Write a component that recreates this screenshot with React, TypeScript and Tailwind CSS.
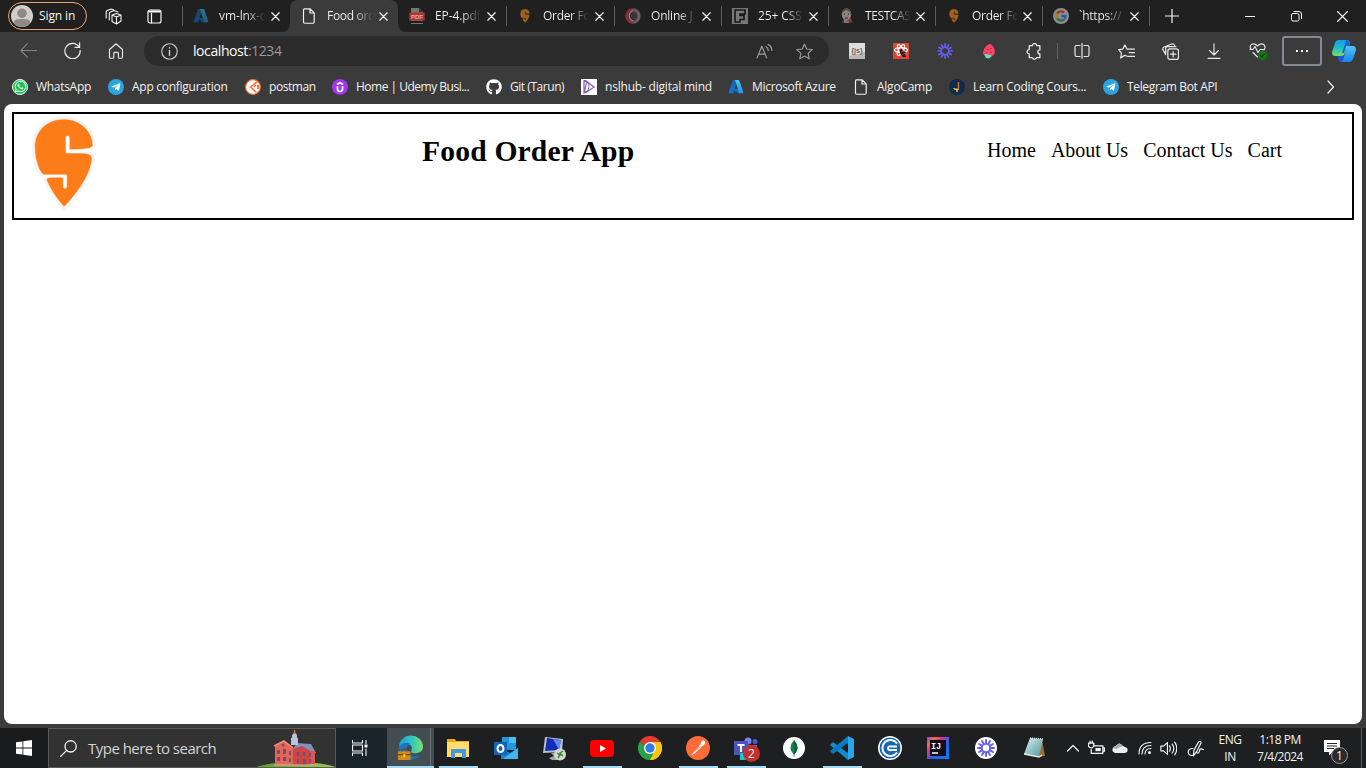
import React from "react";
import { FaGithub, FaWhatsapp, FaTelegramPlane } from "react-icons/fa";

type P = { children: React.ReactNode; s?: number; vb?: string; className?: string; w?: number };
/* Thin-line icon base */
const Line = ({ children, s = 16, vb = "0 0 16 16", className = "", w = 1 }: P) => (
  <svg width={s} height={s} viewBox={vb} fill="none" stroke="currentColor" strokeWidth={w} strokeLinecap="round" strokeLinejoin="round" className={"shrink-0 " + className}>{children}</svg>
);
const Art = ({ children, s = 16, vb = "0 0 16 16", className = "" }: P) => (
  <svg width={s} height={s} viewBox={vb} className={"shrink-0 " + className}>{children}</svg>
);

const Azure = () => (
  <Art>
    <defs>
      <linearGradient id="azl" x1="0" y1="0" x2="0" y2="1"><stop stopColor="#1a5fae" /><stop offset="1" stopColor="#0b7ad6" /></linearGradient>
      <linearGradient id="azr" x1="0" y1="0" x2="0" y2="1"><stop stopColor="#43c9f2" /><stop offset="1" stopColor="#2794e4" /></linearGradient>
    </defs>
    <path d="M5.5 1h4L5.2 14.3H1.6c-.7 0-1-.5-.8-1.1L4.7 1.6c.1-.4.4-.6.8-.6z" fill="url(#azl)" />
    <path d="M6.2 9.8h5.5l2.2 4.500H9.700L4.900 10.600z" fill="#0a73c9" />
    <path d="M6.200 1h4.300c.4 0 .7.2.8.6l4 11.600c.2.6-.2 1.100-.8 1.100h-4.200c.6 0 .9-.5.8-1.100L7.100 1.600C7 1.200 6.700 1 6.200 1z" fill="url(#azr)" />
  </Art>
);
const pinPath = "M102 15C150 15 188 52 189 94C189 102 181 104 162 105Q142 107 118 107V71a5 5 0 0 0-10 0V117H150Q187 117 186 132C184 180 142 238 102 279Q66 238 50 200Q47 191 62 190Q80 188 100 190V218a5 5 0 0 0 10 0V183H50Q40 184 36 179C22 160 14 130 14 98C14 50 52 15 102 15z";
const Pin = () => <Art vb="-47 -2 298 298"><path d={pinPath} fill="#a0601f" stroke="#202020" strokeWidth="3" /></Art>;
const Doc = () => <Line w={1.15}><path d="M3.500.8h5.700l4 4v9.200q0 1.200-1.200 1.200H3.700q-1.200 0-1.200-1.200V2Q2.500.8 3.500.8zM9 1v4h4" /></Line>;
const Pdf = () => (
  <Art><path d="M2 0h8l4 4v12H2z" fill="#777" /><path d="M10 0v4h4z" fill="#333" /><path d="M1 13h14v2H1z" fill="#202020" /><path d="M.3 4.500h15.400v8H.3z" fill="#ad3535" /><text x="8" y="10.800" fontSize="6" fontWeight="700" textAnchor="middle" fill="#d8b0b0" fontFamily="Liberation Sans">PDF</text></Art>
);
const Ring = () => (
  <Art><defs><linearGradient id="rg"><stop stopColor="#8f2929" /><stop offset="1" stopColor="#666" /></linearGradient></defs><circle cx="8" cy="8" r="8" fill="#383838" /><circle cx="8" cy="8" r="6" fill="none" stroke="url(#rg)" strokeWidth="2.800" /><path d="M8 2.500A5.500 5.500 0 0 0 8 13" stroke="#b58686" strokeWidth="1" fill="none" /></Art>
);
const Eff = () => <Art><path fill="#777" d="M0 0h16v16H0z" /><path d="M3 2h10v4H8v1.500h4v4H8v2.500H3z" fill="none" stroke="#181818" strokeWidth="1.600" /></Art>;
const Butler = () => (
  <Art><path d="M3 14l2-4h7l2 5H3z" fill="#333f49" /><path d="M5 10h5v5H5z" fill="#79756f" /><ellipse cx="7.500" cy="6.300" rx="4.700" ry="6" fill="#8d8379" /><path d="M2.800 5C3 1 6 0 8 .5S13 4 12 8l-1-4-4-2z" fill="#514b46" /><path d="M5 6h1m3 0h1M6 10h3" stroke="#292522" /><path d="M8 12l4-1v3l-4-1z" fill="#9c3535" /></Art>
);
const G = () => (
  <Art><circle cx="8" cy="8" r="8" fill="#8d8d8d" /><g fill="none" strokeWidth="2.300"><path d="M11.200 4.600A4.600 4.600 0 0 0 4 5.600" stroke="#a83028" /><path d="M4 5.600a4.600 4.600 0 0 0 0 4.800" stroke="#a88408" /><path d="M4 10.400a4.600 4.600 0 0 0 7 .9" stroke="#25773c" /><path d="M11 11.300A4.600 4.600 0 0 0 12.600 8H8" stroke="#2c5ba8" /></g></Art>
);
const X = () => <Line s={9} vb="0 0 9 9" w={1.25}><path d="M.8.8l7.400 7.400M8.200.8L.8 8.200" /></Line>;

type Tab = { t: string; icon: React.ReactNode; w: string; tr?: string; active?: boolean };
const tabs: Tab[] = [
  { t: "vm-lnx-d", icon: <span className="opacity-50"><Azure /></span>, w: "w-[108px]", tr: "tracking-[-0.1px]" },
  { t: "Food ord", icon: <Doc />, w: "w-[108px]", tr: "tracking-[-0.3px]", active: true },
  { t: "EP-4.pdf", icon: <Pdf />, w: "w-[108px]", tr: "tracking-[-0.1px]" },
  { t: "Order Fo", icon: <Pin />, w: "w-[108px]", tr: "tracking-[-0.3px]" },
  { t: "Online J", icon: <Ring />, w: "w-[107px]", tr: "tracking-[-0.2px]" },
  { t: "25+ CSS", icon: <Eff />, w: "w-[107px]", tr: "tracking-[-0.1px]" },
  { t: "TESTCAS", icon: <Butler />, w: "w-[107px]", tr: "tracking-[-0.4px]" },
  { t: "Order Fo", icon: <Pin />, w: "w-[107px]", tr: "tracking-[-0.3px]" },
  { t: "`https://", icon: <G />, w: "w-[107px]", tr: "tracking-[-0.2px]" },
];

function TabStrip() {
  return (
    <div className="flex h-8 items-center bg-[#202020] text-[#f4f4f4]">
      <div className="ml-2 flex h-7 w-[79px] items-center rounded-full border border-[#f0a46c] pl-[2px]">
        <Art s={22} vb="0 0 22 22"><circle cx="11" cy="11" r="11" fill="#d0cecb" /><circle cx="11" cy="8.300" r="4.800" fill="#8d8b89" /><path d="M3 18.500c0-4 2-4.500 8-4.500s8 .5 8 4.500a11 11 0 0 1-16 0z" fill="#8d8b89" /></Art>
        <span className="ml-[6px] whitespace-nowrap text-[12px] tracking-[-0.1px]">Sign in</span>
      </div>
      <Line s={17} vb="0 0 17 17" className="ml-[18px]" w={1.1}><path d="M7 7l4.500-1.500L16 7v6l-4.500 3L7 13.500zM7 7l4.500 2L16 7M11.500 9v7M4.300 12V5.500Q4.300 4.500 5.300 4L9 2.500l4 1.500M1.200 10V4Q1.200 3 2.200 2.500L6 1l2.500.8" /></Line>
      <Line s={15} vb="0 0 15 15" className="ml-[25px]" w={1.2}><rect x="1" y="1" width="13" height="13" rx="2" /><path d="M4.500 4v10" /><path d="M2 2.500h11" strokeWidth="2.200" /></Line>
      <div className="ml-5 flex h-8">
        {tabs.map((t, i) => (
          <div key={i} className={"relative flex h-8 shrink-0 items-center " + t.w + (t.active ? " rounded-t-lg bg-[#3b3b3b]" : "")}>
            {!t.active && i !== 2 && <i className="absolute top-[6px] left-0 h-5 w-px bg-[#5c5c5c]" />}
            {t.active && (
              <>
                <svg width="8" height="8" className="absolute bottom-0 -left-2"><path d="M8 0v8H0a8 8 0 0 0 8-8z" fill="#3b3b3b" /></svg>
                <svg width="8" height="8" className="absolute -right-2 bottom-0"><path d="M0 0v8h8a8 8 0 0 1-8-8z" fill="#3b3b3b" /></svg>
              </>
            )}
            <span className="ml-[11px] flex w-[26px] shrink-0">{t.icon}</span>
            <span className={"w-[50px] shrink-0 bg-linear-to-r from-[#f4f4f4] from-55% to-transparent to-92% bg-clip-text text-[12px] whitespace-nowrap text-transparent " + t.tr}>{t.t}</span>
            <span className="ml-auto pr-[10px]"><X /></span>
          </div>
        ))}
      </div>
      <i className="h-5 w-px bg-[#5c5c5c]" />
      <Line s={14} vb="0 0 14 14" className="ml-[15px]" w={1.2}><path d="M7 .5v13M.5 7h13" /></Line>
      <div className="ml-auto flex items-center">
        <Line s={10} vb="0 0 10 10" className="mr-[36px]"><path d="M0 5.500h10" /></Line>
        <Line s={11} vb="0 0 11 11" className="mr-[35px]"><rect x=".5" y="2.500" width="7.500" height="7.500" rx="1.500" /><path d="M3 .5h5q2.500 0 2.500 2.500v4.500" /></Line>
        <Line s={11} vb="0 0 11 11" className="mr-[18px]" w={1.1}><path d="M.5.5l10 10M10.500.5l-10 10" /></Line>
      </div>
    </div>
  );
}

const Cell = ({ children, w = "w-11" }: { children: React.ReactNode; w?: string }) => <div className={"flex h-[30px] shrink-0 items-center justify-center " + w}>{children}</div>;
const Burst = ({ color, s = 16 }: { color: string; s?: number }) => (
  <Art s={s}><g stroke={color} strokeWidth="1.700" strokeLinecap="round">{[0, 30, 60, 90, 120, 150, 180, 210, 240, 270, 300, 330].map((a) => <path key={a} d="M8 4.200V.9" transform={`rotate(${a} 8 8)`} />)}</g><circle cx="8" cy="8" r="3.800" fill="none" stroke={color} strokeWidth="1.500" /></Art>
);

function Toolbar() {
  return (
    <div className="flex h-[38px] items-center pl-[6px] text-[#e8e8e8]">
      <Cell><Line s={17} w={1.1} className="-mt-px text-[#808080]"><path d="M15.500 8H.8M7 1.500L.8 8 7 14.500" /></Line></Cell>
      <Cell><Line s={17} w={1.15} className="-mt-px"><path d="M14.200 4.800A7.200 7.200 0 1 0 15.200 8M14.700.8v4.300h-4.300" /></Line></Cell>
      <Cell><Line s={16} w={1.15} className="-mt-px"><path d="M1.500 6.500L8 .8l6.500 5.700V14q0 1.200-1 1.200h-2.300q-.8 0-.8-.8v-4q0-1-1-1H6.700q-1 0-1 1v4q0 .8-.8.8H2.500q-1 0-1-1.200z" /></Line></Cell>
      <div className="ml-[6px] flex h-[30px] w-[685px] shrink-0 items-center rounded-full bg-[#2b2b2b]">
        <Line s={17} className="ml-[17px] text-[#c9c9c9]" w={1.1}><circle cx="8" cy="8" r="7.300" /><path d="M8 7v4.500M8 4.500v.2" strokeWidth="1.400" /></Line>
        <span className="ml-[15px] text-[14px] leading-5 tracking-[-0.42px] text-white">localhost<span className="text-[#999]">:1234</span></span>
        <Line s={17} className="mr-[23px] ml-auto text-[#a0a0a0]" w={1.1}><path d="M1 14L5.500 3 10 14M2.500 10.500h6M9.500 3.500q2 1 2 3.500M11.500 1.500Q15 3 14.800 7" /></Line>
        <Line s={17} className="mr-4 text-[#a0a0a0]"><path d="M8 .9l2.100 4.800 5.200.5-3.900 3.500 1.100 5.200L8 12.200l-4.500 2.700 1.100-5.200L.7 6.200l5.200-.5z" /></Line>
      </div>
      <div className="ml-[6px] flex shrink-0 items-center">
        <Cell><Art><path fill="#dedede" d="M0 0h16v16H0z" /><path d="M0 13l16-4v7H0z" fill="#b8b8b8" /><text x="8" y="9.500" fontSize="7" fontWeight="700" textAnchor="middle" fill="#666" fontFamily="Liberation Sans">{"{js}"}</text></Art></Cell>
        <Cell><Art><path fill="#de4634" d="M0 0h16v16H0z" /><g fill="none" stroke="#fff" strokeWidth="1.300"><ellipse cx="8" cy="7" rx="6.500" ry="2.300" /><ellipse cx="8" cy="7" rx="6" ry="2.300" transform="rotate(60 8 7)" /><ellipse cx="8" cy="7" rx="6" ry="2.300" transform="rotate(120 8 7)" /></g><path d="M6.500 7l2-1 2 2 2.500 1-1 2 1 3h-3l-2-2-1-2z" fill="#28171a" /><path d="M8 9l3-1M9 12l3-2" stroke="#de4634" strokeWidth=".8" /></Art></Cell>
        <Cell><Burst color="#635df0" /></Cell>
        <Cell><Art><path d="M9.500 1C13 3 14.500 8 13.500 11q-1 2.500-5 2.200Q3 13 2 10.500C2 6 6 1 9.500 1z" fill="#ff4268" /><path d="M3 11.500l3-.500 2 1 2-.500.5 2-2.500 2-3-.500z" fill="#62dfbd" /><path d="M7 6v1M10 5v1M10 9v1M6 9v.800" stroke="#85243d" strokeWidth="1.200" /></Art></Cell>
        <Cell><Line s={17} w={1.2}><path d="M4 2.500h3a2 2 0 0 1 4 0h3v4a1.900 1.900 0 0 0 0 3.800v3.500h-3.200a2 2 0 0 1-3.900 0H4v-3.600a2 2 0 0 1 0-4z" /></Line></Cell>
        <i className="mx-[2px] h-4 w-px bg-[#646464]" />
        <Cell><Line w={1.2}><path d="M6 2.500H2.500Q1 2.500 1 4v8q0 1.500 1.500 1.500H6M10 2.500h3.500Q15 2.500 15 4v8q0 1.500-1.500 1.500H10M8 .5v15" /></Line></Cell>
        <Cell><Line w={1.15} s={17}><path d="M8.500 12.500l-2-1-4 2.500.8-4.500L.5 6.300l4-.6L6.500 1.800l2 3.900h7M10.500 9h5M9.500 12.500h6" /></Line></Cell>
        <Cell><Line w={1.15} s={17}><rect x="5.500" y="5.500" width="10" height="10" rx="2" /><path d="M10.500 8v5M8 10.500h5M3.500 11L.8 6Q.5 4.500 1.500 4L9 .9q1.800-.6 2.700 1L12 3M3.500 9.500V5q0-1.500 1.500-1.500h8" /></Line></Cell>
        <Cell><Line w={1.15}><path d="M8 .7v11M3.500 7.500L8 12l4.500-4.500M2 15.300h12" /></Line></Cell>
        <Cell><Line s={18} vb="0 0 18 18" w={1.15}><path d="M2 7.500C-.5 3 4-.5 8.500 4 13-.5 18 3 15 8M4 10.500l4.500 4.500M1 7.500h3l2-3 3 6 2-3h4" /><circle cx="13.500" cy="13.500" r="4.500" fill="#107c10" stroke="none" /><path d="M11.500 13.500l1.300 1.300 2.600-2.600" stroke="#071e07" /></Line></Cell>
      </div>
      <div className="ml-[2px] flex h-[30px] w-10 shrink-0 items-center justify-center gap-[3px] rounded-[3px] border-2 border-[#858a90]">
        <i className="size-[2px] bg-white" /><i className="size-[2px] bg-white" /><i className="size-[2px] bg-white" />
      </div>
      <Cell><Art s={24} vb="0 0 24 24">
        <defs><linearGradient id="ca" x1="0" y1="0" x2="0" y2="1"><stop stopColor="#139be8" /><stop offset=".5" stopColor="#22bfc5" /><stop offset="1" stopColor="#7ddb65" /></linearGradient><linearGradient id="cb" x1="0" y1="0" x2="0" y2="1"><stop stopColor="#52c5ff" /><stop offset="1" stopColor="#1684ea" /></linearGradient></defs>
        <path d="M6 1h9q3 0 3 3v3h-3l-3 9q-1 1-3 1H3q-3 0-3-4l3-9q1-3 3-3z" fill="url(#ca)" /><path d="M7 17h5l-1 4q0 2 2 2H9q-3 0-3-6z" fill="#2552df" /><path d="M14 7h7q3 0 3 4l-3 9q-1 3-3 3H9q2-1 3-5l2-9z" fill="url(#cb)" /><path d="M14 1q4 0 4 6h-4l-2 7-2 0 3-9q1-2 1-4z" fill="#1565cb" /></Art></Cell>
    </div>
  );
}

const Round = ({ bg, children }: { bg: string; children: React.ReactNode }) => <span className={"flex size-4 shrink-0 items-center justify-center rounded-full text-white " + bg}>{children}</span>;
const Tele = () => <Round bg="bg-[#2aa5e0]"><FaTelegramPlane className="-ml-px size-[10px]" /></Round>;
const marks: { t: string; icon: React.ReactNode; w: string; tr: string }[] = [
  { t: "WhatsApp", w: "w-[96px]", tr: "tracking-[-0.3px]", icon: <span className="flex size-4 shrink-0 items-center justify-center rounded-full border border-white bg-[#19c64f] text-white"><FaWhatsapp className="size-[13px]" /></span> },
  { t: "App configuration", w: "w-[137px]", tr: "tracking-[-0.27px]", icon: <Tele /> },
  { t: "postman", w: "w-[87px]", tr: "tracking-[-0.45px]", icon: <Art><circle cx="8" cy="8" r="7.400" fill="#fff" stroke="#ff6c37" strokeWidth="1.100" /><path d="M12.500 2.500L5.500 8l6 5.500M9 8l2-2" fill="none" stroke="#ff6c37" strokeWidth="1.500" /><path d="M13 6v4" stroke="#ff6c37" strokeWidth="2" /></Art> },
  { t: "Home | Udemy Busi...", w: "w-[154px]", tr: "tracking-[-0.5px]", icon: <Art><circle cx="8" cy="8" r="8" fill="#a435f0" /><path d="M5.500 7v3a2.500 2.500 0 0 0 5 0V7M5 5.500L8 3.700l3 1.800" fill="none" stroke="#fff" strokeWidth="1.700" /></Art> },
  { t: "Git (Tarun)", w: "w-[95px]", tr: "tracking-[-0.45px]", icon: <FaGithub className="size-4 shrink-0 text-white" /> },
  { t: "nslhub- digital mind", w: "w-[147px]", tr: "tracking-[-0.2px]", icon: <Art><path fill="#fff" d="M0 0h16v16H0z" /><path d="M3 2v12l2-.500L13 8 5 2zM5.500 2.500L3.500 13.500" fill="none" stroke="#8a68bd" strokeWidth="1.300" /><path d="M3 1.500q5 1 5 6t-4 6" fill="none" stroke="#5b379c" strokeWidth=".8" /></Art> },
  { t: "Microsoft Azure", w: "w-[125px]", tr: "tracking-[-0.3px]", icon: <Azure /> },
  { t: "AlgoCamp", w: "w-[96px]", tr: "tracking-[-0.25px]", icon: <Doc /> },
  { t: "Learn Coding Cours...", w: "w-[154px]", tr: "tracking-[-0.3px]", icon: <Art><circle cx="8" cy="8" r="8" fill="#0b2c4c" /><path d="M9.500 3v6" stroke="#df5d37" strokeWidth="1.500" /><path d="M5 9q0 2 5 1M7 12h2" fill="none" stroke="#f2b83b" strokeWidth="1.500" /></Art> },
  { t: "Telegram Bot API", w: "w-[140px]", tr: "tracking-[-0.35px]", icon: <Tele /> },
];

function SwiggyHeader() {
  return (
    <header className="flex h-[108px] border-2 border-black font-['Liberation_Serif',serif] text-black">
      <svg width="70" height="98" viewBox="0 0 210 294" className="ml-4 shrink-0">
        <path d={pinPath} fill="none" stroke="#f4f4f4" strokeWidth="17" /><path d={pinPath} fill="#fc7c1a" stroke="#fff" strokeWidth="1.500" />
        <path d="M113 71v41h30q36 0 46-12M40 186h65v32" fill="none" stroke="#fff" strokeWidth="7" strokeLinecap="round" />
      </svg>
      <h1 className="ml-[322px] w-[213px] pt-[20px] text-[29.6px] leading-[34px] font-bold tracking-[0.17px] whitespace-nowrap">Food Order App</h1>
      <nav className="mr-[70px] ml-auto flex gap-[15px] pt-[25px] text-[20px] leading-[23px] whitespace-nowrap">
        <span>Home</span><span>About Us</span><span>Contact Us</span><span>Cart</span>
      </nav>
    </header>
  );
}

const Task = ({ children, on }: { children: React.ReactNode; on?: boolean }) => (
  <div className="flex h-10 w-12 shrink-0 flex-col items-center">
    <div className="flex h-[38px] items-center pt-[2px]">{children}</div>
    {on && <i className="h-[2px] w-[39px] bg-[#a5dcf5]" />}
  </div>
);

function Taskbar() {
  return (
    <footer className="flex h-10 items-center bg-[#1d1f20] text-[#f3f3f3]">
      <div className="flex h-10 w-12 shrink-0 items-center justify-center bg-[#191b1c]"><Art><path d="M0 2.300L6.500 1.400v6.200H0zM7.300 1.200L16 0v7.600H7.300zM0 8.400h6.500v6.200L0 13.700zM7.300 8.400H16V16l-8.700-1.200z" fill="#fff" /></Art></div>
      <div className="flex h-10 w-[288px] shrink-0 items-center border border-[#5b5b5b] bg-[#323232]">
        <Line s={17} className="ml-[11px]" w={1.2}><circle cx="10" cy="6" r="5.300" /><path d="M6.300 9.800L.5 15.500" /></Line>
        <span className="ml-[11px] text-[15px] tracking-[-0.52px] whitespace-nowrap text-[#d4d4d4]">Type here to search</span>
        <svg width="78" height="38" viewBox="0 0 78 38" className="ml-auto shrink-0">
          <defs><linearGradient id="hill" x1="0" x2="1"><stop stopColor="#5a9c2e" /><stop offset="1" stopColor="#9dc95b" /></linearGradient></defs>
          <ellipse cx="39" cy="42" rx="44" ry="9" fill="url(#hill)" />
          <path d="M40 14l14 1 5 9H33z" fill="#8290b8" />
          <path d="M18 17l9-5 9 6v18H18z" fill="#e46559" /><path d="M36 22h22v13l-22 1z" fill="#dd5550" /><path d="M36 20l9-3 8 5v14H36z" fill="#cc4646" />
          <path d="M17 17l10-5 9 7" fill="none" stroke="#ee8d7b" strokeWidth="1.500" />
          <path d="M34 9h7v7h-7zM35 6q3-4 5 0v3h-5z" fill="#b7c3df" /><path d="M37.500 1v4" stroke="#df9445" strokeWidth="1.200" />
          <g fill="#71506d"><path d="M20 21h3v4h-3zM26 20h3v5h-3zM32 22h2v4h-2zM20 28h3v4h-3zM26 28h3v4h-3zM32 29h2v4h-2zM40 23h2v4h-2zM46 23h2v4h-2zM52 24h2v4h-2zM40 30h2v4h-2zM46 30h3v6h-3zM52 30h2v4h-2z" /></g>
          <circle cx="26" cy="16" r="1.500" fill="#77526a" /><path d="M17 36h42" stroke="#f1aa88" />
        </svg>
      </div>
      <div className="flex h-10 w-[51px] shrink-0 items-center bg-[#19242b] pl-4"><Line w={1.1}><path d="M.5.5v2.500h10V.5M.5 15.500V13h10v2.500M.5 5h10v6H.5zM14 .5v3M14 9v6.500" /><path d="M12.500 4.500h3v3h-3z" fill="currentColor" stroke="none" /></Line></div>
      <div className="flex h-10 w-[47px] shrink-0 flex-col border-b-2 border-[#a5dcf5] bg-[#444d51]">
        <div className="flex h-[38px] w-[44px] items-center border-r border-[#687075] pl-[11px]">
          <Art s={25} vb="0 0 26 26"><defs><linearGradient id="eg"><stop stopColor="#239bdc" /><stop offset=".5" stopColor="#2ec4c4" /><stop offset="1" stopColor="#7be16a" /></linearGradient></defs><path d="M1 13A12.500 12 0 0 1 26 12c0 5-4 7-8 7-3 0-5-1-4-3q2-6-5-6Q3 10 1 15z" fill="url(#eg)" /><path d="M1 12q5-6 12-3-5 2-4 7c1 6 7 8 14 5-5 7-22 8-22-9z" fill="#1676ca" /><path d="M0 17h13v9H0z" fill="#d88a18" /><path d="M4 17v-2h5v2M0 20.500h13" fill="none" stroke="#7e4612" strokeWidth="1.300" /><path d="M5.500 20h2v3h-2z" fill="#ffe15d" /></Art>
        </div>
      </div>
      <Task on><Art s={22} vb="1 1 22 22"><path d="M1 3h8l1 2h13v16H1z" fill="#e9aa22" /><path d="M1 6h22v15H1z" fill="#ffdc6c" /><path d="M5 14q0-1 1-1h13q1 0 1 1v8h-4v-5H9v5H5z" fill="#3f9bdf" /></Art></Task>
      <Task><Art s={24} vb="0 0 24 24"><path d="M8 1h14v13H8z" fill="#2494df" /><path d="M15 1h7v6h-7z" fill="#40c4f4" /><path d="M7 12l9 5 8-5v11H7z" fill="#1583ce" /><path d="M24 12v11H9z" fill="#3fb7ee" /><path d="M0 6h13v13H0z" fill="#0f65b7" /><ellipse cx="6.500" cy="12.500" rx="3" ry="3.500" fill="none" stroke="#fff" strokeWidth="2" /></Art></Task>
      <Task><Art s={25} vb="0 0 25 25"><path d="M3 1l18 2-1 13-19 1z" fill="#b8c0c8" /><path d="M5 2l14 2-2 10-14 1z" fill="#132cb6" /><path d="M11 3l8 1-2 10z" fill="#6288ea" /><path d="M9 17l3 3-5 2 3 2h8v-7z" fill="#a0a8aa" /><circle cx="18" cy="18.500" r="6" fill="#d5d8d3" /><path d="M15 17l3 2-2 3M21 15l-3 2 3 3" fill="none" stroke="#388834" strokeWidth="1.500" /></Art></Task>
      <Task on><Art s={24} vb="0 0 24 24"><rect y="4" width="24" height="17" rx="4" fill="#f00" /><path d="M10 9l6 3.500-6 3.500z" fill="#fff" /></Art></Task>
      <Task><Art s={24} vb="0 0 24 24"><path d="M12 12L1.600 6A12 12 0 0 1 22.400 6z" fill="#e33b2e" /><path d="M12 12l10.400-6A12 12 0 0 1 12 24z" fill="#fdc60b" /><path d="M1.600 6A12 12 0 0 0 12 24l5-9-5-3z" fill="#27a048" /><path d="M12 6h10.400A12 12 0 0 1 12 24l5-9z" fill="#fdc60b" /><circle cx="12" cy="12" r="6" fill="#fff" /><circle cx="12" cy="12" r="4.700" fill="#347be7" /></Art></Task>
      <Task on><Art s={24} vb="0 0 24 24"><circle cx="12" cy="12" r="12" fill="#ff6c37" /><path d="M5 19.500l1.500-2L14 9.500l1.500 1.500-7 6.500z" fill="#fff" /><ellipse cx="17" cy="7" rx="2" ry="2.700" transform="rotate(30 17 7)" fill="#fff" /><path d="M13 10l3-3 1 2-3 3z" fill="#fff" /><path d="M9.500 14.500l5-4" stroke="#ff6c37" strokeWidth=".6" /></Art></Task>
      <Task on><div className="relative flex"><Art s={24} vb="0 0 24 24"><circle cx="14" cy="5" r="3.500" fill="#7b83eb" /><circle cx="21" cy="5.500" r="2.500" fill="#5059c9" /><path d="M12 9h11v9H12z" fill="#6870d6" /><path d="M0 5h14v14H0z" fill="#4b53bc" /><path d="M3.500 9h7M7 9v7" stroke="#fff" strokeWidth="2" /><path d="M6 17h7v7H6z" fill="#19cbd0" /></Art><span className="absolute top-[9px] left-[9px] flex size-[17px] items-center justify-center rounded-full bg-[#c4302b] text-[12px] leading-none">2</span></div></Task>
      <Task><Art s={24} vb="0 0 24 24"><circle cx="12" cy="12" r="11" fill="#fff" /><path d="M12 4q7 8 0 15-7-7 0-15z" fill="#12844d" /><path d="M12 4q7 8 0 15z" fill="#096a3c" /><path d="M12 18v3" stroke="#839184" /></Art></Task>
      <Task on><Art s={24} vb="0 0 24 24"><path d="M0 9l3-3 16 12-1 6z" fill="#168bd0" /><path d="M18 0l1 6L3 18l-3-3z" fill="#087bc1" /><path d="M18 0l6 3v18l-6 3z" fill="#2aa4ec" /></Art></Task>
      <Task><Art s={24} vb="0 0 24 24"><circle cx="12" cy="12" r="12" fill="#fff" /><circle cx="12" cy="12" r="10.500" fill="#1668b5" /><path d="M19 7.500a8 8 0 1 0 0 9M19 10.500h-6a2 2 0 1 0 0 3.500h6" fill="none" stroke="#fff" strokeWidth="2" /></Art></Task>
      <Task><Art s={22} vb="0 0 22 22"><defs><linearGradient id="ij" x1="0" y1="0" x2="1" y2="1"><stop stopColor="#5b54ec" /><stop offset=".2" stopColor="#f96a3e" /><stop offset=".35" stopColor="#d83099" /><stop offset=".6" stopColor="#285fe8" /><stop offset="1" stopColor="#087cfa" /></linearGradient></defs><path fill="url(#ij)" d="M0 0h22v22H0z" /><path d="M3 3h16v16H3z" fill="#120d19" /><text x="4" y="12" fill="#fff" fontFamily="Liberation Mono" fontWeight="700" fontSize="8.500">IJ</text><path d="M5 16h6" stroke="#fff" strokeWidth="1.500" /></Art></Task>
      <Task><span className="flex size-[22px] items-center justify-center rounded-full bg-white"><Burst color="#625cf0" s={18} /></span></Task>
      <Task><Art s={24} vb="0 0 24 24"><defs><linearGradient id="np" x1="0" y1="0" x2="1" y2="1"><stop stopColor="#d8f3f4" /><stop offset="1" stopColor="#4c929f" /></linearGradient></defs><path d="M20 3l3 17-7 1z" fill="#9b6c35" /><path d="M8 2l13 1-4 18-15-3z" fill="url(#np)" /><path d="M2 18l15 3 3-2" fill="none" stroke="#e6e9dc" strokeWidth="1.500" /><path d="M8 2l13 1" stroke="#d6dadc" strokeWidth="1.500" strokeDasharray="1 1" /></Art></Task>
      <div className="ml-[9px] flex shrink-0 items-center">
        <Line s={12} vb="0 0 12 12" w={1.2}><path d="M.5 9L6 3.500 11.500 9" /></Line>
        <Line s={17} className="ml-[9px]" w={1.2}><path d="M5 5.500h9v7H3V9M14 7.500h1.500v3H14M.5 3h5v3q-2.500 3-5 0zM2 1v2M4 1v2" /><path d="M7 7.500h5v3H7z" fill="currentColor" stroke="none" /></Line>
        <Art s={16} className="ml-[7px]"><path d="M4 6q3-5 7 0l4 2q2 4-2 5H3q-4-2-2-5 1-2 3-2z" fill="#ededed" /><path d="M4 6q3-5 7 0l-7 3-3-1q1-2 3-2z" fill="#aaa" /></Art>
        <Line s={14} vb="0 0 14 14" className="ml-[10px]" w={1.1}><path d="M1 13Q1 1.500 13 1.500M4 13q0-8.500 9-8.500M7 13q0-5.500 6-5.500" /><circle cx="11.500" cy="11.500" r="1.500" fill="currentColor" stroke="none" /></Line>
        <Line s={17} className="ml-[8px]" w={1.1}><path d="M.8 5.800h2.500L7 2.500v11l-3.700-3.300H.8zM9 5.500q1.500 2.500 0 5M11.500 3.800q3 4.200 0 8.400M13.800 2q4 6 0 12" /></Line>
        <Line s={17} className="ml-[10px]" w={1.1}><path d="M6.500 9.500L11 1.800q2-1 2.300.8L9 11l-3 4zM5.500 8Q1 8 1.200 11.500T5.500 14.500M9 12q2 1 2.500-1t1-2.500 3 .5" /></Line>
      </div>
      <div className="ml-[9px] w-[34px] shrink-0 text-center text-[12px] leading-[17px] tracking-[-0.4px]">ENG<br />IN</div>
      <div className="ml-[4px] w-[58px] shrink-0 text-center text-[12px] leading-[17px] tracking-[-0.5px] whitespace-nowrap">1:18 PM<br />7/4/2024</div>
      <div className="relative ml-[15px] flex h-10 w-[26px] shrink-0 pt-3">
        <Art><path d="M0 0h16v12H9l-4 3.500V12H0z" fill="#fff" /><path d="M3 3.500h10M3 6h10M3 8.500h7" stroke="#252525" /></Art>
        <span className="absolute top-[19px] left-[7px] flex size-[17px] items-center justify-center rounded-full border border-[#9a9a9a] bg-[#2b2b2b] text-[12px] leading-none">1</span>
      </div>
      <i className="ml-auto h-10 w-px shrink-0 bg-[#5d5d5d]" /><i className="w-1 shrink-0" />
    </footer>
  );
}

export default function App() {
  return (
    <div className="flex h-[768px] w-[1366px] flex-col overflow-hidden bg-[#3b3b3b] font-['Open_Sans','Noto_Sans',sans-serif]">
      <TabStrip />
      <Toolbar />
      <div className="flex h-[34px] items-center pb-[1px] pl-3 text-[12px] whitespace-nowrap text-[#f2f2f2]">
        {marks.map((m) => <div key={m.t} className={"flex shrink-0 items-center gap-2 " + m.w}>{m.icon}<span className={m.tr}>{m.t}</span></div>)}
        <Line s={14} vb="0 0 14 14" className="mr-[28px] ml-auto" w={1.2}><path d="M4 1l5.500 6L4 13" /></Line>
      </div>
      <main className="mx-1 h-[620px] shrink-0 rounded-lg bg-white p-2"><SwiggyHeader /></main>
      <div className="h-1 shrink-0" />
      <Taskbar />
    </div>
  );
}
